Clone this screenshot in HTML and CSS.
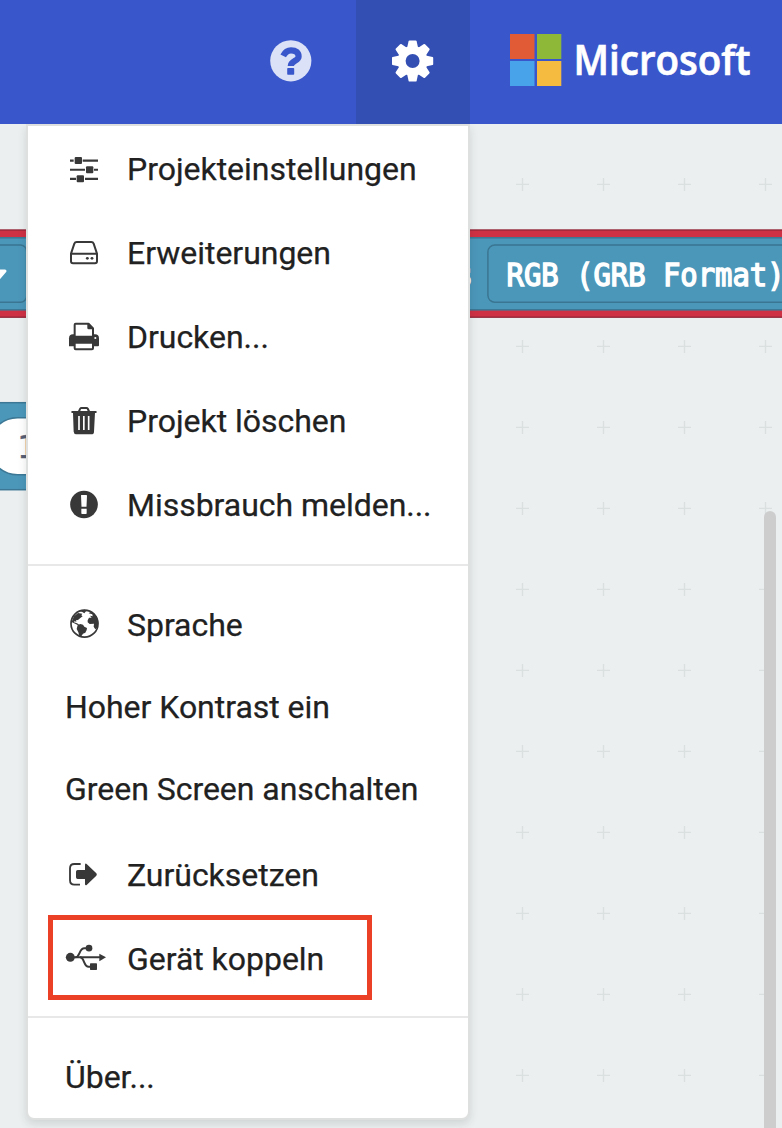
FILE: index.html
```html
<!DOCTYPE html>
<html lang="de">
<head>
<meta charset="utf-8">
<title>Editor</title>
<link rel="stylesheet" href="styles.css">
</head>
<body>
<div class="app">
  <header class="bar">
    <div class="bar-item help">
      <svg width="44" height="44" viewBox="269 39 44 44"><circle cx="290.8" cy="60.8" r="20.6" fill="#dbe1f6"/><path d="M283.200 55.800Q286 50.300 291 50.300C296 50.300 298.600 52.700 298.600 56.500C298.600 61 290.800 61 290.800 66" fill="none" stroke="#3957cb" stroke-width="6.200"/><rect x="287.200" y="68" width="7" height="6.800" rx="0.800" fill="#3957cb"/></svg>
    </div>
    <div class="bar-item settings">
      <svg width="44" height="44" viewBox="-21.600 -22 44 44"><g fill="#fff"><g id="teeth"><path id="tooth" d="M-5.500-13L-4-20Q-3.800-20.600-3-20.600H3Q3.800-20.600 4-20L5.500-13V13L4 20Q3.800 20.600 3 20.600H-3Q-3.800 20.600-4 20L-5.500 13Z"/><use href="#tooth" transform="rotate(45)"/></g><use href="#teeth" transform="rotate(90)"/><circle r="15"/></g><circle r="7" fill="#334fb4"/></svg>
    </div>
    <div class="brand">
      <svg width="264" height="60" viewBox="509 33 264 60"><path fill="#e15c36" d="M510 34h24.500v25H510z"/><path fill="#8eb838" d="M537 34h24.300v25H537z"/><path fill="#48a3ea" d="M510 61h24.500v25H510z"/><path fill="#f5bb41" d="M537 61h24.300v25H537z"/><text class="brand-name" x="573.500" y="75" textLength="177" lengthAdjust="spacingAndGlyphs">Microsoft</text></svg>
    </div>
  </header>
  <main class="workspace">
    <svg class="canvas" width="782" height="1004" viewBox="0 124 782 1004">
      <defs><pattern id="grid" x="482" y="144" width="81" height="81" patternUnits="userSpaceOnUse"><path d="M34 40.400h13M40.500 34v13" stroke="#dadfdf" stroke-width="1.400"/></pattern></defs>
      <rect y="124" width="782" height="1004" fill="#ebeff0"/>
      <rect y="124" width="782" height="1004" fill="url(#grid)"/>
      <rect x="-10" y="230" width="802" height="87.200" fill="#cf3144" stroke="#95283a" stroke-width="1.400"/>
      <rect x="-10" y="237.800" width="802" height="72" fill="#4b97ba" stroke="#3c7895" stroke-width="1.600"/>
      <rect x="-60" y="244.900" width="86.500" height="57.400" rx="6" fill="none" stroke="#3a7591" stroke-width="1.500"/>
      <rect x="487.900" y="244.900" width="330" height="57.400" rx="7" fill="none" stroke="#3a7591" stroke-width="1.500"/>
      <path d="M-8 271H5L-1 278Z" fill="#fff" stroke="#fff" stroke-width="3" stroke-linejoin="round"/>
      <text class="block-text" x="455.500" y="285.500" textLength="17.400" lengthAdjust="spacingAndGlyphs">s</text>
      <text class="block-text" x="506.500" y="285.500" textLength="278" lengthAdjust="spacingAndGlyphs">RGB (GRB Format)</text>
      <rect x="-10" y="402.700" width="200" height="87" fill="#4b97ba" stroke="#3c7895" stroke-width="1.500"/>
      <rect x="-11" y="417.700" width="90" height="57" rx="28.500" fill="#fff" stroke="#3c7895" stroke-width="1.500"/>
      <text class="value-text" x="17" y="458">1</text>
      <rect x="764" y="511" width="12" height="640" rx="6" fill="#cdcdcd"/>
    </svg>
    <nav class="menu">
      <section class="group first">
        <a class="item"><svg class="icon" viewBox="62 147 44 44"><g transform="translate(0 120) scale(.33333)" fill="#383838"><path d="M210 118.500h84v6.500h-84zM210 146h84v6.500h-84zM210 173.500h84v6.500h-84z"/><path d="M221 108h27v27h-27zM255 135.500h27v27h-27zM228 163h27v27h-27z" fill="#fff"/><rect x="224" y="111" width="22" height="21" rx="3"/><rect x="258" y="138.500" width="22" height="21" rx="3"/><rect x="230" y="166" width="22" height="21" rx="3"/></g></svg><span>Projekteinstellungen</span></a>
        <a class="item"><svg class="icon" viewBox="62 231 44 44"><g transform="translate(0 120) scale(.33333)" fill="none" stroke="#383838" stroke-width="6"><path d="M213 401L223 371Q225 366 230 366H274Q279 366 281 371L291 401V424Q291 430 285 430H219Q213 430 213 424ZM213 401H291"/><circle cx="262" cy="415" r="4.300" fill="#383838" stroke="none"/><circle cx="276" cy="415" r="4.300" fill="#383838" stroke="none"/></g></svg><span>Erweiterungen</span></a>
        <a class="item"><svg class="icon" viewBox="62 315 44 44"><g transform="translate(0 120) scale(.33333)" fill="#383838"><path d="M207 679V655Q207 643 219 643H285Q297 643 297 655V676Q297 679 294 679Z"/><path d="M224 650V614Q224 611 227 611H265L279 625V650Z" fill="#fff" stroke="#383838" stroke-width="6"/><path d="M262 609V624Q262 628 266 628H281V624L267 609Z"/><path d="M221 651H282V665H221Z"/><rect x="224" y="668" width="55" height="20" rx="3" fill="#fff" stroke="#383838" stroke-width="6"/><circle cx="286" cy="654" r="3.200" fill="#fff"/></g></svg><span>Drucken...</span></a>
        <a class="item"><svg class="icon" viewBox="62 399 44 44"><g transform="translate(0 360) scale(.33333)" fill="#383838"><path d="M233 155L238 145Q240 141 245 141H259Q264 141 266 145L271 155H264L260 147H243L240 155Z"/><rect x="214" y="153" width="76" height="6" rx="2"/><path d="M219 158H285L282 215Q282 223 274 223H229Q222 223 221 215Z"/><path d="M237 168V210M251.500 168V210M266 168V210" stroke="#fff" stroke-width="5"/></g></svg><span>Projekt löschen</span></a>
        <a class="item"><svg class="icon" viewBox="62 483 44 44"><g transform="translate(0 360) scale(.33333)"><circle cx="252" cy="433.500" r="41.500" fill="#383838"/><path d="M243 406Q243 405 245 405H259Q261 405 261 407L259.500 440H244.500ZM244 446H260V460Q260 462 258 462H246Q244 462 244 460Z" fill="#fff"/></g></svg><span>Missbrauch melden...</span></a>
      </section>
      <section class="group second">
        <a class="item"><svg class="icon" viewBox="62 603 44 44"><g transform="translate(40 590) scale(.33333)" fill="#383838"><circle cx="133.500" cy="101" r="40.500" fill="#fff" stroke="#383838" stroke-width="5"/><path d="M96 93L102 79L114 69L127 71L124 76L128 79L121 84L114 90L108 91L109 96L104 93L102 97L111 100L118 104L113 105L101 99L96 97Z"/><path d="M113 105L121 102L129 104L133 110L141 114L140 120L136 128L129 131L124 139L118 138L115 127L110 117Z"/><path d="M143 91L147 83L155 83L150 77L158 79L157 73L146 70L151 66L162 69L171 82L175 99L171 114L166 118L161 110L162 101L149 102L143 97Z"/><path d="M119 63L133 59L148 63L138 64L133 70L127 66Z"/></g></svg><span>Sprache</span></a>
        <a class="item plain contrast"><span>Hoher Kontrast ein</span></a>
        <a class="item plain"><span>Green Screen anschalten</span></a>
        <a class="item reset"><svg class="icon" viewBox="62 853 44 44"><g transform="translate(40 840) scale(.33333)" fill="#383838"><path d="M122 72H103Q90 72 90 85V121Q90 134 103 134H120" fill="none" stroke="#383838" stroke-width="5.500"/><path d="M108 95Q108 90 113 90H135V74Q136 69 140 72L169 100Q172 103 169 107L140 135Q136 138 135 133V117H113Q108 117 108 112Z"/></g></svg><span>Zurücksetzen</span></a>
        <a class="item"><svg class="icon" viewBox="62 937 44 44"><g transform="translate(40 840) scale(.33333)" fill="#383838"><circle cx="91" cy="352" r="13.500"/><path d="M90 352H185" stroke="#383838" stroke-width="6"/><path d="M178 341L198 352L178 364Z"/><path d="M106 352C120 352 117 325 133 325H147M120 352C134 352 130 380 146 380H158" fill="none" stroke="#383838" stroke-width="6"/><circle cx="147" cy="324.500" r="10"/><rect x="150" y="370" width="21" height="20" rx="2"/></g></svg><span>Gerät koppeln</span><i class="highlight"></i></a>
      </section>
      <section class="group last">
        <a class="item plain"><span>Über...</span></a>
      </section>
    </nav>
  </main>
</div>
</body>
</html>
```
FILE: styles.css
```css
* { box-sizing: border-box; }
body { margin: 0; font-family: Roboto, sans-serif; }
svg { display: block; }
.app { width: 782px; height: 1128px; overflow: hidden; }
.bar { height: 124px; display: flex; background: #3957cb; }
.bar-item { display: flex; flex: none; align-items: center; justify-content: center; padding-bottom: 2px; }
.help { width: 130px; margin-left: 226px; }
.settings { width: 114px; background: #334fb4; }
.brand { flex: none; padding: 33px 0 0 39px; }
.brand-name { font: 600 41px "Open Sans", sans-serif; fill: #fff; stroke: #fff; stroke-width: .7px; }
.workspace { position: relative; height: 1004px; overflow: hidden; padding-left: 26px; }
.canvas { position: absolute; inset: 0; }
.block-text { font: 400 32px "DejaVu Sans Mono", monospace; fill: #fff; stroke: #fff; stroke-width: 1.5px; }
.value-text { font: 400 32px "DejaVu Sans Mono", monospace; fill: #575e75; stroke: #575e75; stroke-width: .6px; }
.menu {
  position: relative;
  width: 444px;
  height: 996px;
  background: #fff;
  border: 2px solid #dedfdf;
  border-radius: 0 0 8px 8px;
  box-shadow: 0 4px 8px rgba(34, 36, 38, .13);
}
.group { border-bottom: 2px solid #e8e8e8; }
.first { height: 440px; padding-top: 1px; }
.second { height: 452px; padding-top: 17px; }
.last { border: 0; padding-top: 18px; }
.item {
  position: relative;
  display: flex;
  align-items: center;
  gap: 21px;
  height: 84px;
  padding-left: 34px;
  font-size: 32px;
  line-height: 38px;
  letter-spacing: -.03px;
  color: #212121;
  white-space: nowrap;
}
.item span { -webkit-text-stroke: .25px #212121; }
.icon { flex: none; width: 44px; height: 44px; }
.plain { height: 82px; padding-left: 37px; }
.contrast { margin-top: -1px; }
.reset { margin-top: 3px; }
.highlight {
  position: absolute;
  left: 20px;
  top: -2px;
  width: 324px;
  height: 85px;
  border: 5px solid #eb4025;
}
```
